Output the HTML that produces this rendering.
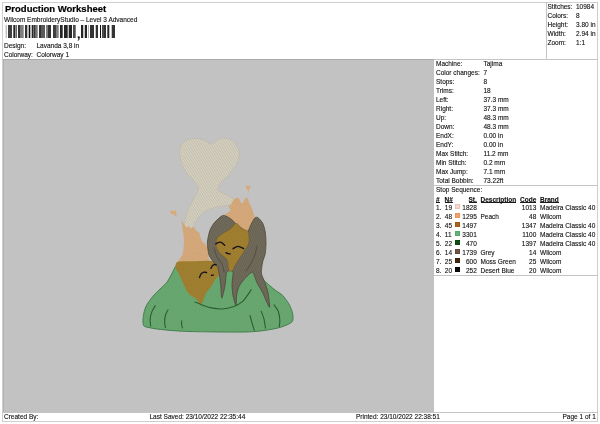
<!DOCTYPE html>
<html><head><meta charset="utf-8">
<style>
html,body{margin:0;padding:0;background:#fff;}
body{width:600px;height:424px;position:relative;overflow:hidden;will-change:transform;font-family:"Liberation Sans",sans-serif;color:#111;}
.t{position:absolute;font-size:6.5px;line-height:7px;white-space:pre;-webkit-text-stroke:0.2px rgba(0,0,0,0.5);}
.r{text-align:right;}
.ln{position:absolute;background:#c4c4c4;}
#title{position:absolute;left:5px;top:4px;font-size:9.5px;font-weight:bold;line-height:10px;white-space:pre;color:#000;-webkit-text-stroke:0.2px #000;}
#view{position:absolute;left:3px;top:59px;width:431px;height:353px;background:#c2c2c2;border-top:1px solid #aaa;border-left:1px solid #b0b0b0;box-sizing:border-box;}
.u{font-weight:bold;background:linear-gradient(#1a1a1a,#1a1a1a) 0 6px/100% 1px no-repeat;}
.sw{position:absolute;width:5px;height:5px;box-sizing:border-box;}
</style></head><body>
<!-- page border -->
<div class="ln" style="left:2px;top:2px;width:596px;height:1px;background:#cfcfcf"></div>
<div class="ln" style="left:2px;top:421px;width:596px;height:1px;background:#cfcfcf"></div>
<div class="ln" style="left:2px;top:2px;width:1px;height:420px;background:#cfcfcf"></div>
<div class="ln" style="left:597px;top:2px;width:1px;height:420px;background:#cfcfcf"></div>

<div id="title">Production Worksheet</div>
<div class="t" style="left:4px;top:16px">Wilcom EmbroideryStudio – Level 3 Advanced</div>
<svg width="600" height="424" style="position:absolute;left:0;top:0"><rect x="5.7" y="25" width="1.0" height="13" fill="#000" fill-opacity="0.35"/><rect x="8" y="25" width="4.0" height="13" fill="#000" fill-opacity="0.75"/><rect x="13.3" y="25" width="1.7" height="13" fill="#000" fill-opacity="0.85"/><rect x="15.3" y="25" width="1.7" height="13" fill="#000" fill-opacity="0.6"/><rect x="18" y="25" width="2.0" height="13" fill="#000" fill-opacity="0.8"/><rect x="20" y="25" width="3.7" height="13" fill="#000" fill-opacity="0.5"/><rect x="25" y="25" width="2.3" height="13" fill="#000" fill-opacity="0.8"/><rect x="28.7" y="25" width="1.6" height="13" fill="#000" fill-opacity="0.95"/><rect x="31.7" y="25" width="1.3" height="13" fill="#000" fill-opacity="0.85"/><rect x="33.3" y="25" width="2.2" height="13" fill="#000" fill-opacity="0.8"/><rect x="35.5" y="25" width="2.2" height="13" fill="#000" fill-opacity="0.55"/><rect x="39" y="25" width="2.0" height="13" fill="#000" fill-opacity="0.8"/><rect x="41" y="25" width="4.0" height="13" fill="#000" fill-opacity="0.65"/><rect x="46" y="25" width="2.0" height="13" fill="#000" fill-opacity="0.5"/><rect x="48" y="25" width="3.0" height="13" fill="#000" fill-opacity="0.8"/><rect x="53" y="25" width="3.0" height="13" fill="#000" fill-opacity="0.75"/><rect x="56" y="25" width="2.7" height="13" fill="#000" fill-opacity="0.5"/><rect x="60" y="25" width="2.7" height="13" fill="#000" fill-opacity="0.85"/><rect x="64" y="25" width="3.7" height="13" fill="#000" fill-opacity="0.85"/><rect x="68.7" y="25" width="3.3" height="13" fill="#000" fill-opacity="0.85"/><rect x="73" y="25" width="2.7" height="13" fill="#000" fill-opacity="0.7"/><rect x="81" y="25" width="2.0" height="13" fill="#000" fill-opacity="0.85"/><rect x="83.3" y="25" width="1.4" height="13" fill="#000" fill-opacity="0.3"/><rect x="85" y="25" width="2.0" height="13" fill="#000" fill-opacity="0.85"/><rect x="88" y="25" width="1.0" height="13" fill="#000" fill-opacity="0.3"/><rect x="90" y="25" width="4.0" height="13" fill="#000" fill-opacity="0.8"/><rect x="95.7" y="25" width="2.3" height="13" fill="#000" fill-opacity="0.8"/><rect x="100" y="25" width="1.0" height="13" fill="#000" fill-opacity="0.95"/><rect x="102" y="25" width="2.0" height="13" fill="#000" fill-opacity="0.7"/><rect x="104" y="25" width="2.0" height="13" fill="#000" fill-opacity="0.8"/><rect x="107.3" y="25" width="2.0" height="13" fill="#000" fill-opacity="0.85"/><rect x="111.7" y="25" width="3.3" height="13" fill="#000" fill-opacity="0.8"/><circle cx="78.7" cy="37.3" r="1.15" fill="#111"/><path d="M79.8,37.4 Q79.9,39.9 77.9,40.8 L77.6,40.3 Q78.7,39.6 78.4,38.2 Z" fill="#222"/></svg>
<div class="t" style="left:4px;top:42px">Design:</div>
<div class="t" style="left:36.5px;top:42px">Lavanda 3,8 in</div>
<div class="t" style="left:4px;top:51px">Colorway:</div>
<div class="t" style="left:36.5px;top:51px">Colorway 1</div>

<!-- stats box -->
<div class="ln" style="left:546px;top:2px;width:1px;height:57px"></div>
<div class="t" style="left:547.5px;top:3px">Stitches:</div><div class="t" style="left:576px;top:3px">10984</div>
<div class="t" style="left:547.5px;top:12px">Colors:</div><div class="t" style="left:576px;top:12px">8</div>
<div class="t" style="left:547.5px;top:21px">Height:</div><div class="t" style="left:576px;top:21px">3.80 in</div>
<div class="t" style="left:547.5px;top:30px">Width:</div><div class="t" style="left:576px;top:30px">2.94 in</div>
<div class="t" style="left:547.5px;top:39px">Zoom:</div><div class="t" style="left:576px;top:39px">1:1</div>

<div class="ln" style="left:2px;top:59px;width:596px;height:1px"></div>
<div id="view"></div>
<svg id="emb" width="600" height="424" viewBox="0 0 600 424" style="position:absolute;left:0;top:0"><!--EMB--><defs>
<pattern id="t1" width="2" height="2" patternUnits="userSpaceOnUse" patternTransform="rotate(32)"><rect width="2" height="0.9" fill="#000" fill-opacity="0.06"/><rect y="1" width="2" height="0.6" fill="#fff" fill-opacity="0.045"/></pattern>
<pattern id="t2" width="2" height="2" patternUnits="userSpaceOnUse" patternTransform="rotate(-40)"><rect width="2" height="0.9" fill="#000" fill-opacity="0.06"/><rect y="1" width="2" height="0.6" fill="#fff" fill-opacity="0.045"/></pattern>
<pattern id="t3" width="2" height="2" patternUnits="userSpaceOnUse" patternTransform="rotate(65)"><rect width="2" height="0.9" fill="#000" fill-opacity="0.06"/><rect y="1" width="2" height="0.6" fill="#fff" fill-opacity="0.045"/></pattern>
<pattern id="t4" width="2.1" height="2.1" patternUnits="userSpaceOnUse" patternTransform="rotate(58)"><rect width="2.1" height="0.9" fill="#000" fill-opacity="0.08"/><rect y="1.1" width="2.1" height="0.7" fill="#fff" fill-opacity="0.08"/></pattern>
</defs>
<path d="M185.3,228.0 C184.1,226.6 184.9,222.3 185.3,219.6 C185.7,216.9 186.6,213.0 187.7,210.2 C188.8,207.4 191.0,203.5 192.4,200.8 C193.8,198.1 196.2,194.6 197.1,192.5 C198.0,190.4 198.8,188.4 198.3,186.6 C197.8,184.8 195.7,183.2 193.6,180.7 C191.5,178.2 186.3,174.0 184.2,170.1 C182.1,166.2 180.0,158.3 179.6,154.5 C179.2,150.7 180.2,146.8 181.5,144.5 C182.8,142.2 185.8,140.4 188.0,139.5 C190.2,138.6 193.5,138.2 195.9,138.3 C198.3,138.4 201.7,139.1 204.0,140.0 C206.3,140.9 209.2,144.3 211.3,144.2 C213.4,144.1 215.9,140.4 218.0,139.5 C220.1,138.6 223.2,138.1 225.4,138.3 C227.7,138.5 230.9,138.9 233.0,141.0 C235.1,143.1 238.8,149.7 239.6,152.4 C240.4,155.1 239.0,157.1 238.5,159.0 C238.0,160.9 237.8,162.7 236.0,165.4 C234.2,168.1 229.1,174.4 226.6,177.2 C224.1,180.0 220.7,182.3 219.5,184.2 C218.3,186.1 217.6,188.7 218.3,190.1 C219.0,191.5 222.1,192.5 224.2,193.7 C226.3,194.9 230.7,197.3 232.5,198.4 C234.3,199.5 236.5,199.8 236.0,200.8 C235.5,201.8 231.7,204.1 229.0,205.0 C226.3,205.9 221.6,205.9 218.3,206.7 C215.0,207.5 209.9,209.0 207.0,210.5 C204.1,212.0 200.8,215.1 199.0,217.0 C197.2,218.9 195.9,221.2 195.0,223.0 C194.1,224.8 194.5,228.2 193.0,229.0 C191.5,229.8 186.5,229.4 185.3,228.0Z" fill="#d3cebc" stroke="#bab4a2" stroke-width="0.5"/>
<path d="M185.3,228.0 C184.1,226.6 184.9,222.3 185.3,219.6 C185.7,216.9 186.6,213.0 187.7,210.2 C188.8,207.4 191.0,203.5 192.4,200.8 C193.8,198.1 196.2,194.6 197.1,192.5 C198.0,190.4 198.8,188.4 198.3,186.6 C197.8,184.8 195.7,183.2 193.6,180.7 C191.5,178.2 186.3,174.0 184.2,170.1 C182.1,166.2 180.0,158.3 179.6,154.5 C179.2,150.7 180.2,146.8 181.5,144.5 C182.8,142.2 185.8,140.4 188.0,139.5 C190.2,138.6 193.5,138.2 195.9,138.3 C198.3,138.4 201.7,139.1 204.0,140.0 C206.3,140.9 209.2,144.3 211.3,144.2 C213.4,144.1 215.9,140.4 218.0,139.5 C220.1,138.6 223.2,138.1 225.4,138.3 C227.7,138.5 230.9,138.9 233.0,141.0 C235.1,143.1 238.8,149.7 239.6,152.4 C240.4,155.1 239.0,157.1 238.5,159.0 C238.0,160.9 237.8,162.7 236.0,165.4 C234.2,168.1 229.1,174.4 226.6,177.2 C224.1,180.0 220.7,182.3 219.5,184.2 C218.3,186.1 217.6,188.7 218.3,190.1 C219.0,191.5 222.1,192.5 224.2,193.7 C226.3,194.9 230.7,197.3 232.5,198.4 C234.3,199.5 236.5,199.8 236.0,200.8 C235.5,201.8 231.7,204.1 229.0,205.0 C226.3,205.9 221.6,205.9 218.3,206.7 C215.0,207.5 209.9,209.0 207.0,210.5 C204.1,212.0 200.8,215.1 199.0,217.0 C197.2,218.9 195.9,221.2 195.0,223.0 C194.1,224.8 194.5,228.2 193.0,229.0 C191.5,229.8 186.5,229.4 185.3,228.0Z" fill="url(#t4)"/>
<path d="M170.3,213.0 C169.8,212.3 170.4,211.2 170.8,210.8 C171.2,210.4 172.0,210.5 172.5,210.6 C173.0,210.7 173.4,211.3 173.8,211.2 C174.2,211.1 174.6,210.2 175.0,210.2 C175.4,210.2 176.1,210.4 176.3,211.0 C176.5,211.6 176.2,212.5 176.3,213.5 C176.4,214.5 177.2,216.6 176.8,216.8 C176.4,217.0 175.1,215.4 174.0,214.8 C172.9,214.2 170.8,213.7 170.3,213.0Z" fill="#d8aa7a"/>
<path d="M246.0,187.5 C245.8,186.7 246.1,185.9 246.4,185.6 C246.7,185.3 247.3,185.6 247.6,185.8 C247.9,186.0 247.9,187.0 248.1,187.0 C248.3,187.0 248.5,185.8 248.8,185.6 C249.1,185.4 249.8,185.5 250.0,185.8 C250.2,186.1 250.4,186.7 250.2,187.5 C250.0,188.3 249.1,189.4 248.8,190.5 C248.5,191.6 248.8,194.0 248.6,194.0 C248.4,194.0 248.2,191.6 247.8,190.5 C247.4,189.4 246.2,188.3 246.0,187.5Z" fill="#d8aa7a"/>
<path d="M178.5,264.0 C176.0,263.6 179.2,259.8 179.5,259.0 C179.8,258.2 182.2,255.8 182.5,255.0 C182.8,254.2 183.4,250.2 183.5,249.0 C183.6,247.8 184.0,241.5 184.0,240.0 C184.0,238.5 183.2,232.6 183.0,231.0 C182.8,229.4 181.4,220.9 181.5,220.3 C181.6,219.7 183.4,223.2 183.8,223.8 C184.2,224.4 185.8,227.1 186.2,227.3 C186.6,227.5 188.8,226.1 189.2,226.2 C189.6,226.3 190.6,228.5 190.9,228.5 C191.2,228.5 192.9,226.6 193.3,226.7 C193.7,226.8 195.3,229.3 195.6,229.7 C195.9,230.1 197.1,231.3 197.4,231.5 C197.7,231.7 198.9,232.2 199.2,232.6 C199.4,233.0 200.2,236.1 200.4,236.8 C200.6,237.5 201.7,240.9 202.1,241.5 C202.5,242.1 205.0,243.9 205.5,244.5 C206.0,245.1 207.7,248.3 208.0,249.0 C208.3,249.7 208.6,252.2 208.6,253.0 C208.6,253.8 208.4,257.1 208.5,258.0 C208.6,258.9 211.7,263.5 209.2,264.0 C206.7,264.5 181.0,264.4 178.5,264.0Z" fill="#d8aa7a"/>
<path d="M178.5,264.0 C176.0,263.6 179.2,259.8 179.5,259.0 C179.8,258.2 182.2,255.8 182.5,255.0 C182.8,254.2 183.4,250.2 183.5,249.0 C183.6,247.8 184.0,241.5 184.0,240.0 C184.0,238.5 183.2,232.6 183.0,231.0 C182.8,229.4 181.4,220.9 181.5,220.3 C181.6,219.7 183.4,223.2 183.8,223.8 C184.2,224.4 185.8,227.1 186.2,227.3 C186.6,227.5 188.8,226.1 189.2,226.2 C189.6,226.3 190.6,228.5 190.9,228.5 C191.2,228.5 192.9,226.6 193.3,226.7 C193.7,226.8 195.3,229.3 195.6,229.7 C195.9,230.1 197.1,231.3 197.4,231.5 C197.7,231.7 198.9,232.2 199.2,232.6 C199.4,233.0 200.2,236.1 200.4,236.8 C200.6,237.5 201.7,240.9 202.1,241.5 C202.5,242.1 205.0,243.9 205.5,244.5 C206.0,245.1 207.7,248.3 208.0,249.0 C208.3,249.7 208.6,252.2 208.6,253.0 C208.6,253.8 208.4,257.1 208.5,258.0 C208.6,258.9 211.7,263.5 209.2,264.0 C206.7,264.5 181.0,264.4 178.5,264.0Z" fill="url(#t2)"/>
<path d="M224.8,214.6 C224.8,213.7 227.1,213.3 227.7,212.8 C228.3,212.3 230.4,210.6 230.5,209.9 C230.6,209.2 228.5,206.8 228.6,206.2 C228.7,205.6 231.0,204.8 231.4,204.3 C231.8,203.8 231.9,202.1 232.4,201.4 C232.9,200.7 235.5,198.0 236.2,197.7 C236.9,197.4 238.5,198.1 239.0,198.6 C239.5,199.1 240.5,201.9 240.9,202.4 C241.3,202.9 242.4,203.6 242.8,203.3 C243.2,203.0 244.2,200.1 244.6,199.5 C245.0,198.9 246.6,197.1 247.0,197.2 C247.4,197.3 248.1,199.7 248.4,200.5 C248.7,201.3 249.9,204.3 250.3,205.2 C250.7,206.0 251.9,208.2 252.2,209.0 C252.5,209.8 253.4,212.8 253.6,213.7 C253.8,214.5 254.7,216.3 254.5,217.5 C254.3,218.7 252.7,224.4 252.0,226.0 C251.3,227.6 249.0,233.0 247.5,233.0 C246.0,233.0 238.9,227.1 237.0,226.0 C235.1,224.9 229.2,223.1 228.0,222.0 C226.8,220.9 224.8,215.5 224.8,214.6Z" fill="#d8aa7a"/>
<path d="M224.8,214.6 C224.8,213.7 227.1,213.3 227.7,212.8 C228.3,212.3 230.4,210.6 230.5,209.9 C230.6,209.2 228.5,206.8 228.6,206.2 C228.7,205.6 231.0,204.8 231.4,204.3 C231.8,203.8 231.9,202.1 232.4,201.4 C232.9,200.7 235.5,198.0 236.2,197.7 C236.9,197.4 238.5,198.1 239.0,198.6 C239.5,199.1 240.5,201.9 240.9,202.4 C241.3,202.9 242.4,203.6 242.8,203.3 C243.2,203.0 244.2,200.1 244.6,199.5 C245.0,198.9 246.6,197.1 247.0,197.2 C247.4,197.3 248.1,199.7 248.4,200.5 C248.7,201.3 249.9,204.3 250.3,205.2 C250.7,206.0 251.9,208.2 252.2,209.0 C252.5,209.8 253.4,212.8 253.6,213.7 C253.8,214.5 254.7,216.3 254.5,217.5 C254.3,218.7 252.7,224.4 252.0,226.0 C251.3,227.6 249.0,233.0 247.5,233.0 C246.0,233.0 238.9,227.1 237.0,226.0 C235.1,224.9 229.2,223.1 228.0,222.0 C226.8,220.9 224.8,215.5 224.8,214.6Z" fill="url(#t2)"/>
<path d="M175.4,266.7 C174.6,267.9 172.9,271.8 171.8,273.8 C170.7,275.8 168.7,280.0 167.1,282.0 C165.5,284.0 161.9,287.2 160.0,289.1 C158.1,291.0 154.8,294.1 153.0,296.2 C151.2,298.3 148.0,302.7 146.8,304.8 C145.6,306.9 144.7,309.7 144.2,311.6 C143.7,313.5 143.1,317.4 143.0,319.2 C142.9,321.0 143.0,324.2 143.4,325.2 C143.8,326.2 144.2,326.4 146.0,326.9 C147.8,327.4 153.3,328.5 157.0,329.0 C160.7,329.5 169.6,330.4 174.0,330.7 C178.4,331.0 183.9,331.3 190.0,331.5 C196.1,331.7 212.6,331.9 220.0,332.0 C227.4,332.1 239.8,332.1 245.3,332.0 C250.8,331.9 256.9,331.4 261.2,330.9 C265.5,330.4 273.8,329.0 277.2,328.2 C280.6,327.4 284.7,325.9 286.7,325.0 C288.7,324.1 291.1,322.8 292.0,321.8 C292.9,320.8 293.1,319.0 293.1,317.6 C293.1,316.2 292.6,313.0 292.0,311.2 C291.4,309.4 290.1,305.9 288.8,303.8 C287.5,301.7 284.3,297.1 282.5,295.3 C280.7,293.5 277.5,292.0 275.0,290.0 C272.5,288.0 265.9,282.4 263.6,280.3 C261.3,278.2 259.8,275.9 258.0,274.0 C256.2,272.1 252.4,267.6 250.0,266.0 C247.6,264.4 242.9,262.5 240.0,262.0 C237.1,261.5 231.3,261.7 228.0,262.0 C224.7,262.3 218.7,263.9 215.0,264.0 C211.3,264.1 204.0,263.1 200.0,263.0 C196.0,262.9 187.9,262.7 185.0,263.0 C182.1,263.3 179.3,264.5 178.0,265.0 C176.7,265.5 176.2,265.5 175.4,266.7Z" fill="#68a970" stroke="#3a7a44" stroke-width="0.9"/>
<path d="M175.4,266.7 C174.6,267.9 172.9,271.8 171.8,273.8 C170.7,275.8 168.7,280.0 167.1,282.0 C165.5,284.0 161.9,287.2 160.0,289.1 C158.1,291.0 154.8,294.1 153.0,296.2 C151.2,298.3 148.0,302.7 146.8,304.8 C145.6,306.9 144.7,309.7 144.2,311.6 C143.7,313.5 143.1,317.4 143.0,319.2 C142.9,321.0 143.0,324.2 143.4,325.2 C143.8,326.2 144.2,326.4 146.0,326.9 C147.8,327.4 153.3,328.5 157.0,329.0 C160.7,329.5 169.6,330.4 174.0,330.7 C178.4,331.0 183.9,331.3 190.0,331.5 C196.1,331.7 212.6,331.9 220.0,332.0 C227.4,332.1 239.8,332.1 245.3,332.0 C250.8,331.9 256.9,331.4 261.2,330.9 C265.5,330.4 273.8,329.0 277.2,328.2 C280.6,327.4 284.7,325.9 286.7,325.0 C288.7,324.1 291.1,322.8 292.0,321.8 C292.9,320.8 293.1,319.0 293.1,317.6 C293.1,316.2 292.6,313.0 292.0,311.2 C291.4,309.4 290.1,305.9 288.8,303.8 C287.5,301.7 284.3,297.1 282.5,295.3 C280.7,293.5 277.5,292.0 275.0,290.0 C272.5,288.0 265.9,282.4 263.6,280.3 C261.3,278.2 259.8,275.9 258.0,274.0 C256.2,272.1 252.4,267.6 250.0,266.0 C247.6,264.4 242.9,262.5 240.0,262.0 C237.1,261.5 231.3,261.7 228.0,262.0 C224.7,262.3 218.7,263.9 215.0,264.0 C211.3,264.1 204.0,263.1 200.0,263.0 C196.0,262.9 187.9,262.7 185.0,263.0 C182.1,263.3 179.3,264.5 178.0,265.0 C176.7,265.5 176.2,265.5 175.4,266.7Z" fill="url(#t1)"/>
<path d="M177.9,261.8 C180.1,261.2 190.3,261.4 194.0,261.3 C197.7,261.2 207.7,260.7 210.0,260.8 C212.3,260.9 213.0,261.5 214.0,262.2 C215.0,262.9 217.6,265.8 218.3,267.0 C219.0,268.2 219.7,271.6 219.7,272.7 C219.7,273.8 218.7,275.5 218.3,276.2 C217.9,276.9 217.0,277.1 216.2,278.3 C215.4,279.5 212.5,284.5 211.3,286.3 C210.1,288.1 206.8,291.9 205.8,293.8 C204.8,295.7 203.2,301.3 202.6,302.5 C202.0,303.7 201.4,305.0 200.6,304.5 C199.8,304.0 197.0,299.6 195.8,298.5 C194.6,297.4 191.0,295.8 190.0,295.0 C189.0,294.2 188.1,293.0 187.2,291.5 C186.3,290.0 183.5,284.1 182.5,282.0 C181.5,279.9 179.7,275.6 178.9,273.8 C178.1,272.0 175.5,268.1 175.4,266.7 C175.3,265.3 175.7,262.4 177.9,261.8Z" fill="#a17f2e"/>
<path d="M177.9,261.8 C180.1,261.2 190.3,261.4 194.0,261.3 C197.7,261.2 207.7,260.7 210.0,260.8 C212.3,260.9 213.0,261.5 214.0,262.2 C215.0,262.9 217.6,265.8 218.3,267.0 C219.0,268.2 219.7,271.6 219.7,272.7 C219.7,273.8 218.7,275.5 218.3,276.2 C217.9,276.9 217.0,277.1 216.2,278.3 C215.4,279.5 212.5,284.5 211.3,286.3 C210.1,288.1 206.8,291.9 205.8,293.8 C204.8,295.7 203.2,301.3 202.6,302.5 C202.0,303.7 201.4,305.0 200.6,304.5 C199.8,304.0 197.0,299.6 195.8,298.5 C194.6,297.4 191.0,295.8 190.0,295.0 C189.0,294.2 188.1,293.0 187.2,291.5 C186.3,290.0 183.5,284.1 182.5,282.0 C181.5,279.9 179.7,275.6 178.9,273.8 C178.1,272.0 175.5,268.1 175.4,266.7 C175.3,265.3 175.7,262.4 177.9,261.8Z" fill="url(#t2)"/>
<path d="M207.4,242.7 C207.5,239.9 208.9,233.2 209.7,230.9 C210.5,228.6 213.0,224.3 214.4,222.6 C215.8,220.9 220.3,216.9 221.5,216.1 C222.7,215.3 223.6,215.3 224.5,215.5 C225.4,215.7 228.5,217.4 229.5,218.0 C230.5,218.6 232.6,220.3 233.3,221.0 C234.0,221.7 235.1,223.4 235.5,223.8 C235.9,224.2 236.5,224.1 237.0,224.5 C237.5,224.9 239.2,226.4 240.0,227.0 C240.8,227.6 242.9,229.4 243.8,230.0 C244.7,230.6 246.8,232.3 247.5,232.0 C248.2,231.7 249.5,228.1 250.0,227.0 C250.5,225.9 251.4,223.6 252.0,222.5 C252.6,221.4 254.6,217.9 255.4,217.4 C256.2,216.9 257.7,217.5 258.6,218.2 C259.5,218.9 261.9,221.7 262.7,223.2 C263.5,224.7 264.8,229.1 265.2,231.4 C265.6,233.7 266.0,240.4 266.0,243.0 C266.0,245.6 265.6,251.8 265.2,254.0 C264.8,256.2 263.0,259.7 262.6,262.0 C262.2,264.3 261.1,270.9 261.4,273.3 C261.7,275.7 264.0,280.0 264.8,282.4 C265.6,284.8 267.7,290.8 268.2,293.7 C268.7,296.6 270.1,307.4 269.4,307.3 C268.7,307.2 264.1,295.5 262.6,292.6 C261.1,289.7 258.1,284.8 256.9,282.4 C255.7,280.0 253.9,272.6 252.4,272.2 C250.9,271.8 246.0,277.3 244.4,279.0 C242.8,280.7 239.7,284.9 238.8,286.9 C237.9,288.9 236.8,293.8 236.5,296.0 C236.2,298.2 236.4,305.6 236.0,305.6 C235.6,305.6 233.6,298.4 233.1,296.0 C232.6,293.6 232.0,287.2 232.0,284.6 C232.0,282.0 233.1,274.9 233.1,273.3 C233.1,271.7 232.4,271.3 232.0,271.0 C231.6,270.7 230.5,270.5 230.0,270.5 C229.5,270.5 228.4,270.7 228.0,271.0 C227.6,271.3 226.6,271.7 226.3,273.3 C226.0,274.9 225.7,281.7 225.2,284.6 C224.7,287.5 222.3,298.2 221.8,298.2 C221.3,298.2 221.0,287.4 220.7,284.6 C220.4,281.8 219.6,275.9 219.2,273.8 C218.8,271.7 218.3,268.4 217.6,267.0 C216.9,265.6 214.0,262.9 213.0,261.5 C212.0,260.1 209.7,257.2 209.0,255.0 C208.3,252.8 207.3,245.5 207.4,242.7Z" fill="#6e6858" stroke="#4a4236" stroke-width="0.75"/>
<path d="M207.4,242.7 C207.5,239.9 208.9,233.2 209.7,230.9 C210.5,228.6 213.0,224.3 214.4,222.6 C215.8,220.9 220.3,216.9 221.5,216.1 C222.7,215.3 223.6,215.3 224.5,215.5 C225.4,215.7 228.5,217.4 229.5,218.0 C230.5,218.6 232.6,220.3 233.3,221.0 C234.0,221.7 235.1,223.4 235.5,223.8 C235.9,224.2 236.5,224.1 237.0,224.5 C237.5,224.9 239.2,226.4 240.0,227.0 C240.8,227.6 242.9,229.4 243.8,230.0 C244.7,230.6 246.8,232.3 247.5,232.0 C248.2,231.7 249.5,228.1 250.0,227.0 C250.5,225.9 251.4,223.6 252.0,222.5 C252.6,221.4 254.6,217.9 255.4,217.4 C256.2,216.9 257.7,217.5 258.6,218.2 C259.5,218.9 261.9,221.7 262.7,223.2 C263.5,224.7 264.8,229.1 265.2,231.4 C265.6,233.7 266.0,240.4 266.0,243.0 C266.0,245.6 265.6,251.8 265.2,254.0 C264.8,256.2 263.0,259.7 262.6,262.0 C262.2,264.3 261.1,270.9 261.4,273.3 C261.7,275.7 264.0,280.0 264.8,282.4 C265.6,284.8 267.7,290.8 268.2,293.7 C268.7,296.6 270.1,307.4 269.4,307.3 C268.7,307.2 264.1,295.5 262.6,292.6 C261.1,289.7 258.1,284.8 256.9,282.4 C255.7,280.0 253.9,272.6 252.4,272.2 C250.9,271.8 246.0,277.3 244.4,279.0 C242.8,280.7 239.7,284.9 238.8,286.9 C237.9,288.9 236.8,293.8 236.5,296.0 C236.2,298.2 236.4,305.6 236.0,305.6 C235.6,305.6 233.6,298.4 233.1,296.0 C232.6,293.6 232.0,287.2 232.0,284.6 C232.0,282.0 233.1,274.9 233.1,273.3 C233.1,271.7 232.4,271.3 232.0,271.0 C231.6,270.7 230.5,270.5 230.0,270.5 C229.5,270.5 228.4,270.7 228.0,271.0 C227.6,271.3 226.6,271.7 226.3,273.3 C226.0,274.9 225.7,281.7 225.2,284.6 C224.7,287.5 222.3,298.2 221.8,298.2 C221.3,298.2 221.0,287.4 220.7,284.6 C220.4,281.8 219.6,275.9 219.2,273.8 C218.8,271.7 218.3,268.4 217.6,267.0 C216.9,265.6 214.0,262.9 213.0,261.5 C212.0,260.1 209.7,257.2 209.0,255.0 C208.3,252.8 207.3,245.5 207.4,242.7Z" fill="url(#t3)"/>
<path d="M216.4,247.0 C216.0,245.0 216.3,240.2 217.0,238.5 C217.7,236.8 220.6,235.0 222.0,234.0 C223.4,233.0 226.3,231.6 227.7,230.7 C229.1,229.8 231.2,228.2 232.2,227.3 C233.2,226.4 234.4,224.4 235.0,223.9 C235.6,223.4 236.5,223.5 237.0,223.6 C237.5,223.7 237.8,224.4 238.4,225.0 C239.0,225.6 240.8,227.7 241.8,228.4 C242.8,229.1 245.0,229.7 245.8,230.1 C246.6,230.5 247.6,230.4 248.0,231.5 C248.4,232.6 249.0,236.5 249.1,238.0 C249.2,239.5 249.0,241.5 248.7,242.8 C248.4,244.1 247.4,246.3 246.7,247.6 C246.0,248.9 244.3,251.1 243.4,252.4 C242.5,253.7 241.1,255.9 240.2,257.2 C239.3,258.5 237.8,260.8 237.0,262.0 C236.2,263.2 235.1,265.4 234.5,266.5 C233.9,267.6 233.3,269.3 232.8,270.0 C232.3,270.7 231.0,271.5 230.5,271.5 C230.0,271.5 229.1,270.8 228.8,270.0 C228.5,269.2 228.4,266.6 228.2,265.3 C228.0,264.0 227.8,261.5 227.4,260.5 C227.0,259.5 226.4,258.7 225.5,257.8 C224.6,256.9 221.5,255.0 220.3,253.6 C219.1,252.2 216.8,249.0 216.4,247.0Z" fill="#a17f2e" stroke="#6a5020" stroke-width="0.4"/>
<path d="M216.4,247.0 C216.0,245.0 216.3,240.2 217.0,238.5 C217.7,236.8 220.6,235.0 222.0,234.0 C223.4,233.0 226.3,231.6 227.7,230.7 C229.1,229.8 231.2,228.2 232.2,227.3 C233.2,226.4 234.4,224.4 235.0,223.9 C235.6,223.4 236.5,223.5 237.0,223.6 C237.5,223.7 237.8,224.4 238.4,225.0 C239.0,225.6 240.8,227.7 241.8,228.4 C242.8,229.1 245.0,229.7 245.8,230.1 C246.6,230.5 247.6,230.4 248.0,231.5 C248.4,232.6 249.0,236.5 249.1,238.0 C249.2,239.5 249.0,241.5 248.7,242.8 C248.4,244.1 247.4,246.3 246.7,247.6 C246.0,248.9 244.3,251.1 243.4,252.4 C242.5,253.7 241.1,255.9 240.2,257.2 C239.3,258.5 237.8,260.8 237.0,262.0 C236.2,263.2 235.1,265.4 234.5,266.5 C233.9,267.6 233.3,269.3 232.8,270.0 C232.3,270.7 231.0,271.5 230.5,271.5 C230.0,271.5 229.1,270.8 228.8,270.0 C228.5,269.2 228.4,266.6 228.2,265.3 C228.0,264.0 227.8,261.5 227.4,260.5 C227.0,259.5 226.4,258.7 225.5,257.8 C224.6,256.9 221.5,255.0 220.3,253.6 C219.1,252.2 216.8,249.0 216.4,247.0Z" fill="url(#t1)"/>
<g fill="none" stroke="#4a4236" stroke-width="0.7" stroke-linecap="round">
<path d="M257.0,246.0 C256.6,247.7 255.7,252.8 254.5,256.0 C253.3,259.2 251.4,262.5 250.0,265.0 C248.6,267.5 246.7,270.0 246.0,271.0" />
<path d="M214.0,248.0 C214.5,249.5 215.7,254.3 217.0,257.0 C218.3,259.7 220.8,261.5 222.0,264.0 C223.2,266.5 223.7,270.7 224.0,272.0" />
</g>
<g fill="none" stroke="#2c5e34" stroke-width="1.1" stroke-linecap="round">
<path d="M155.3,305.6 C154.7,306.6 152.8,309.5 151.9,311.6 C151.1,313.7 150.4,316.0 150.2,318.4 C150.0,320.8 150.5,324.7 150.6,326.0" />
<path d="M168.0,309.9 C167.6,310.8 166.1,313.0 165.5,315.0 C164.9,317.0 164.6,319.7 164.6,321.8 C164.6,323.9 165.3,326.7 165.5,327.7" />
<path d="M181.6,320.9 C181.6,321.5 181.5,323.1 181.6,324.3 C181.7,325.5 182.3,327.4 182.4,328.0" />
<path d="M250.1,315.5 C250.4,316.6 251.0,319.3 251.7,321.8 C252.4,324.3 253.9,328.9 254.3,330.3" />
<path d="M261.2,311.2 C261.6,312.4 263.2,315.9 263.9,318.7 C264.6,321.5 265.2,326.6 265.5,328.2" />
<path d="M274.0,304.9 C274.7,305.9 277.2,308.7 278.2,311.2 C279.2,313.7 279.6,317.1 279.8,319.7 C280.0,322.3 279.4,325.5 279.3,326.6" />
<path d="M195.0,302.0 C196.1,302.4 198.8,303.7 201.5,304.7 C204.2,305.7 207.9,307.2 211.3,307.9 C214.7,308.6 218.5,309.2 222.1,309.0 C225.7,308.8 229.5,308.1 232.9,306.8 C236.3,305.5 239.6,304.3 242.7,301.4 C245.8,298.5 249.9,291.5 251.3,289.5" />
</g><g fill="none" stroke="#15121a" stroke-width="1.35" stroke-linecap="round">
<path d="M215.7,243.8 C216.5,243.5 219.1,241.8 220.6,242.1 C222.1,242.4 224.1,244.8 224.8,245.4" />
<path d="M233.0,248.7 C233.8,248.3 236.2,246.3 238.0,246.3 C239.8,246.3 242.8,248.3 243.7,248.7" />
<path d="M226.0,252.6 C226.3,252.8 227.3,253.4 228.0,253.6 C228.7,253.8 229.9,253.8 230.3,253.8" />
<path d="M199.5,277.6 C199.8,276.9 200.5,274.5 201.3,273.6 C202.1,272.7 203.2,272.4 204.1,272.2 C205.0,272.0 206.2,272.5 206.6,272.6" />
<path d="M210.9,268.4 C211.2,267.9 211.9,266.2 212.6,265.6 C213.2,265.0 214.2,264.6 214.8,264.5 C215.4,264.4 216.0,264.8 216.2,264.9" />
<path d="M211.4,275.2 C211.6,275.2 212.1,275.4 212.4,275.4 C212.7,275.3 213.2,275.0 213.3,274.9" />
</g><!--/EMB--></svg>

<!-- machine info -->
<div class="t" style="left:436px;top:60px">Machine:</div><div class="t" style="left:483.5px;top:60px">Tajima</div>
<div class="t" style="left:436px;top:69px">Color changes:</div><div class="t" style="left:483.5px;top:69px">7</div>
<div class="t" style="left:436px;top:78px">Stops:</div><div class="t" style="left:483.5px;top:78px">8</div>
<div class="t" style="left:436px;top:87px">Trims:</div><div class="t" style="left:483.5px;top:87px">18</div>
<div class="t" style="left:436px;top:96px">Left:</div><div class="t" style="left:483.5px;top:96px">37.3 mm</div>
<div class="t" style="left:436px;top:105px">Right:</div><div class="t" style="left:483.5px;top:105px">37.3 mm</div>
<div class="t" style="left:436px;top:114px">Up:</div><div class="t" style="left:483.5px;top:114px">48.3 mm</div>
<div class="t" style="left:436px;top:123px">Down:</div><div class="t" style="left:483.5px;top:123px">48.3 mm</div>
<div class="t" style="left:436px;top:132px">EndX:</div><div class="t" style="left:483.5px;top:132px">0.00 in</div>
<div class="t" style="left:436px;top:141px">EndY:</div><div class="t" style="left:483.5px;top:141px">0.00 in</div>
<div class="t" style="left:436px;top:150px">Max Stitch:</div><div class="t" style="left:483.5px;top:150px">11.2 mm</div>
<div class="t" style="left:436px;top:159px">Min Stitch:</div><div class="t" style="left:483.5px;top:159px">0.2 mm</div>
<div class="t" style="left:436px;top:168px">Max Jump:</div><div class="t" style="left:483.5px;top:168px">7.1 mm</div>
<div class="t" style="left:436px;top:177px">Total Bobbin:</div><div class="t" style="left:483.5px;top:177px">73.22ft</div>


<div class="ln" style="left:434px;top:185px;width:164px;height:1px"></div>
<div class="t" style="left:436px;top:186px">Stop Sequence:</div>

<div class="t u" style="left:436px;top:196px">#</div><div class="t u" style="left:444.5px;top:196px">N#</div><div class="t u r" style="right:123.2px;top:196px">St.</div><div class="t u" style="left:480.5px;top:196px">Description</div><div class="t u r" style="right:63.7px;top:196px">Code</div><div class="t u" style="left:540px;top:196px">Brand</div>
<div class="t" style="left:436px;top:204px">1.</div><div class="t" style="left:444.8px;top:204px">19</div><div class="sw" style="left:455px;top:204px;background:#f7d6cc;border:1px solid #ebc0b6"></div><div class="t r" style="right:123.2px;top:204px">1828</div><div class="t r" style="right:63.7px;top:204px">1013</div><div class="t" style="left:540px;top:204px">Madeira Classic 40</div>
<div class="t" style="left:436px;top:213px">2.</div><div class="t" style="left:444.8px;top:213px">48</div><div class="sw" style="left:455px;top:213px;background:#f4a06a;border:1px solid #ea945d"></div><div class="t r" style="right:123.2px;top:213px">1295</div><div class="t" style="left:480.5px;top:213px">Peach</div><div class="t r" style="right:63.7px;top:213px">48</div><div class="t" style="left:540px;top:213px">Wilcom</div>
<div class="t" style="left:436px;top:222px">3.</div><div class="t" style="left:444.8px;top:222px">45</div><div class="sw" style="left:455px;top:222px;background:#a8661c;border:1px solid #995b16"></div><div class="t r" style="right:123.2px;top:222px">1497</div><div class="t r" style="right:63.7px;top:222px">1347</div><div class="t" style="left:540px;top:222px">Madeira Classic 40</div>
<div class="t" style="left:436px;top:231px">4.</div><div class="t" style="left:444.8px;top:231px">11</div><div class="sw" style="left:455px;top:231px;background:#62b27a;border:1px solid #56a66e"></div><div class="t r" style="right:123.2px;top:231px">3301</div><div class="t r" style="right:63.7px;top:231px">1100</div><div class="t" style="left:540px;top:231px">Madeira Classic 40</div>
<div class="t" style="left:436px;top:240px">5.</div><div class="t" style="left:444.8px;top:240px">22</div><div class="sw" style="left:455px;top:240px;background:#0e4e14;border:1px solid #0b4410"></div><div class="t r" style="right:123.2px;top:240px">470</div><div class="t r" style="right:63.7px;top:240px">1397</div><div class="t" style="left:540px;top:240px">Madeira Classic 40</div>
<div class="t" style="left:436px;top:249px">6.</div><div class="t" style="left:444.8px;top:249px">14</div><div class="sw" style="left:455px;top:249px;background:#6e5444;border:1px solid #60483a"></div><div class="t r" style="right:123.2px;top:249px">1739</div><div class="t" style="left:480.5px;top:249px">Grey</div><div class="t r" style="right:63.7px;top:249px">14</div><div class="t" style="left:540px;top:249px">Wilcom</div>
<div class="t" style="left:436px;top:258px">7.</div><div class="t" style="left:444.8px;top:258px">25</div><div class="sw" style="left:455px;top:258px;background:#46280e;border:1px solid #38200b"></div><div class="t r" style="right:123.2px;top:258px">600</div><div class="t" style="left:480.5px;top:258px">Moss Green</div><div class="t r" style="right:63.7px;top:258px">25</div><div class="t" style="left:540px;top:258px">Wilcom</div>
<div class="t" style="left:436px;top:267px">8.</div><div class="t" style="left:444.8px;top:267px">20</div><div class="sw" style="left:455px;top:267px;background:#0c0c0c;border:1px solid #060606"></div><div class="t r" style="right:123.2px;top:267px">252</div><div class="t" style="left:480.5px;top:267px">Desert Blue</div><div class="t r" style="right:63.7px;top:267px">20</div><div class="t" style="left:540px;top:267px">Wilcom</div>
<div class="ln" style="left:434px;top:275px;width:164px;height:1px"></div>

<!-- footer -->
<div class="ln" style="left:2px;top:412px;width:596px;height:1px"></div>
<div class="t" style="left:4px;top:412.5px">Created By:</div>
<div class="t" style="left:149.5px;top:412.5px">Last Saved: 23/10/2022 22:35:44</div>
<div class="t" style="left:356px;top:412.5px">Printed: 23/10/2022 22:38:51</div>
<div class="t" style="left:562.5px;top:412.5px">Page 1 of 1</div>
</body></html>
